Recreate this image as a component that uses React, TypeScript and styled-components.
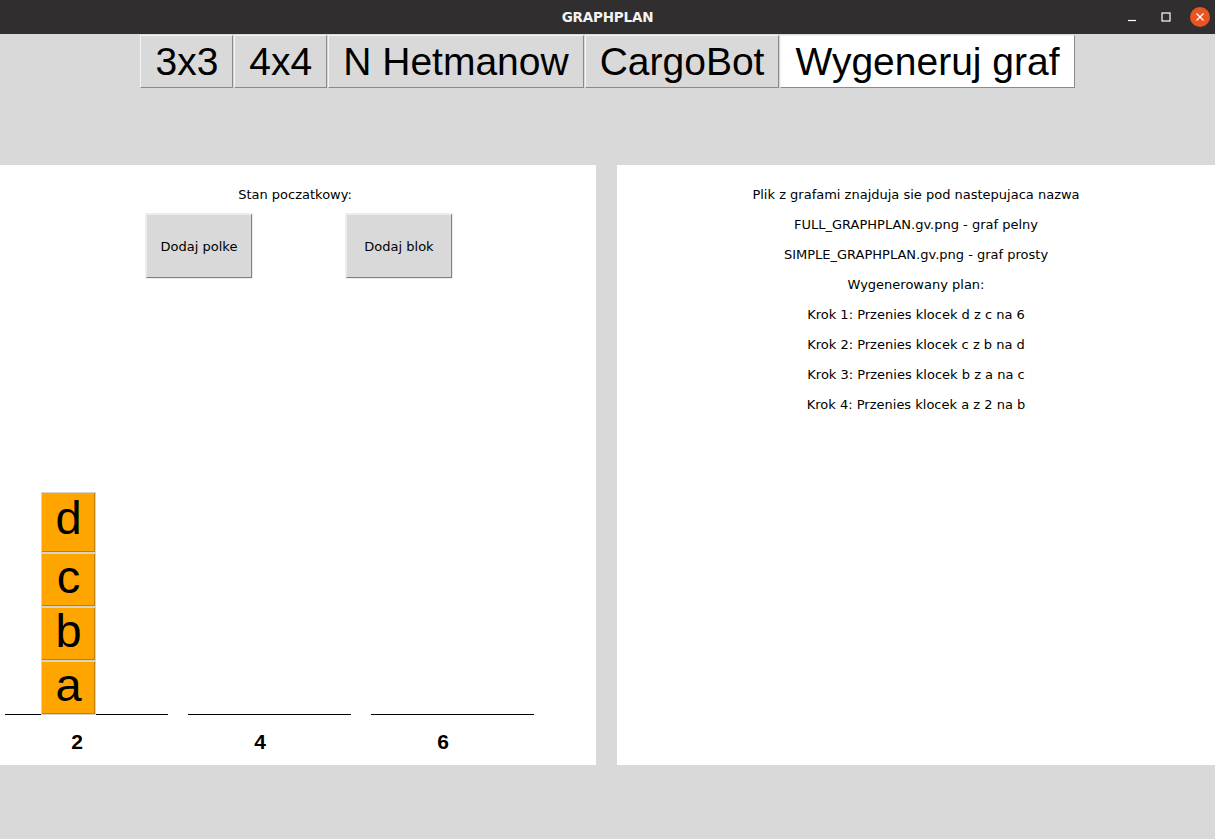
import React from "react";
import styled, { createGlobalStyle } from "styled-components";

const GlobalStyle = createGlobalStyle`
  html, body {
    margin: 0;
    padding: 0;
    background: #d9d9d9;
    font-family: "DejaVu Sans", sans-serif;
  }
`;

const tabs = ["3x3", "4x4", "N Hetmanow", "CargoBot", "Wygeneruj graf"];

const planLines = [
  "Plik z grafami znajduja sie pod nastepujaca nazwa",
  "FULL_GRAPHPLAN.gv.png - graf pelny",
  "SIMPLE_GRAPHPLAN.gv.png - graf prosty",
  "Wygenerowany plan:",
  "Krok 1: Przenies klocek d z c na 6",
  "Krok 2: Przenies klocek c z b na d",
  "Krok 3: Przenies klocek b z a na c",
  "Krok 4: Przenies klocek a z 2 na b",
];

const shelves = [
  { id: 2, blocks: ["d", "c", "b", "a"] },
  { id: 4, blocks: [] as string[] },
  { id: 6, blocks: [] as string[] },
];

const App: React.FC = () => {
  return (
    <>
      <GlobalStyle />
      <Window>
        <TitleBar>
          <span />
          <Title>GRAPHPLAN</Title>
          <Controls>
            <Control>
              <svg width="10" height="10" viewBox="0 0 10 10">
                <line x1="1" y1="8.5" x2="9" y2="8.5" stroke="#fff" strokeWidth="1.2" />
              </svg>
            </Control>
            <Control>
              <svg width="10" height="10" viewBox="0 0 10 10">
                <rect x="1" y="1" width="8" height="8" fill="none" stroke="#fff" strokeWidth="1.2" />
              </svg>
            </Control>
            <CloseButton>
              <svg width="10" height="10" viewBox="0 0 10 10">
                <path d="M1.5 1.5 L8.5 8.5 M8.5 1.5 L1.5 8.5" stroke="#fff" strokeWidth="1.4" />
              </svg>
            </CloseButton>
          </Controls>
        </TitleBar>

        <TabBar>
          {tabs.map((t, i) => (
            <TabButton key={t} $active={i === tabs.length - 1}>{t}</TabButton>
          ))}
        </TabBar>

        <Panels>
          <LeftPanel>
            <Caption $shift={6}>Stan poczatkowy:</Caption>
            <ActionRow>
              <ActionButton>Dodaj polke</ActionButton>
              <ActionButton>Dodaj blok</ActionButton>
            </ActionRow>
            <Scene>
              {shelves.map(s => (
                <Shelf key={s.id}>
                  <Stack>
                    {s.blocks.map((b, i) => (
                      <Block key={b} $tall={i === 0}>{b}</Block>
                    ))}
                  </Stack>
                  <ShelfLine />
                  <ShelfLabel>{s.id}</ShelfLabel>
                </Shelf>
              ))}
            </Scene>
          </LeftPanel>
          <RightPanel>
            {planLines.map(l => (
              <Caption key={l}>{l}</Caption>
            ))}
          </RightPanel>
        </Panels>
      </Window>
    </>
  );
};
export default App;

const Window = styled.div`
  width: 1215px;
  height: 839px;
  background: #d9d9d9;
  display: flex;
  flex-direction: column;
`;

const TitleBar = styled.div`
  height: 34px;
  background: #302e2e;
  display: grid;
  grid-template-columns: 1fr auto 1fr;
  align-items: center;
`;

const Title = styled.div`
  color: #f2f2f2;
  font-family: "DejaVu Sans", sans-serif;
  font-weight: bold;
  font-size: 13.5px;
  letter-spacing: -0.2px;
`;

const Controls = styled.div`
  justify-self: end;
  display: flex;
  align-items: center;
  gap: 14px;
  padding-right: 5px;
`;

const Control = styled.div`
  width: 20px;
  height: 20px;
  display: flex;
  align-items: center;
  justify-content: center;
`;

const CloseButton = styled(Control)`
  border-radius: 50%;
  background: #e95420;
`;

const TabBar = styled.div`
  margin-top: 1px;
  display: flex;
  justify-content: center;
  gap: 1px;
`;

const TabButton = styled.div<{ $active?: boolean }>`
  height: 53px;
  box-sizing: border-box;
  padding: 0 14px;
  display: flex;
  align-items: center;
  font-family: "Liberation Sans", Arial, sans-serif;
  font-size: 39px;
  color: #000;
  background: ${p => (p.$active ? "#ffffff" : "#d9d9d9")};
  border: 1px solid;
  border-color: #f4f4f4 #8a8a8a #8a8a8a #f4f4f4;
`;

const Panels = styled.div`
  margin-top: 77px;
  display: flex;
  gap: 21px;
  height: 600px;
`;

const PanelBase = styled.div`
  background: #ffffff;
  display: flex;
  flex-direction: column;
  padding-top: 15px;
  box-sizing: border-box;
`;

const LeftPanel = styled(PanelBase)`
  width: 596px;
`;

const RightPanel = styled(PanelBase)`
  flex: 1;
`;

const Caption = styled.div<{ $shift?: number }>`
  line-height: 30px;
  font-size: 13px;
  color: #000;
  text-align: center;
  padding-right: ${p => p.$shift ?? 0}px;
`;

const ActionRow = styled.div`
  margin-top: 4px;
  display: flex;
  gap: 94px;
  padding-left: 146px;
`;

const ActionButton = styled.div`
  width: 106px;
  height: 64px;
  box-sizing: border-box;
  display: flex;
  align-items: center;
  justify-content: center;
  background: #d9d9d9;
  font-size: 13px;
  color: #000;
  border: 1px solid;
  border-color: #ececec #7f7f7f #7f7f7f #ececec;
  box-shadow: 0 0 0 1px #ececec;
`;

const Scene = styled.div`
  flex: 1;
  display: flex;
  align-items: flex-end;
  gap: 20px;
  padding: 0 0 11px 5px;
`;

const Shelf = styled.div`
  width: 163px;
  display: flex;
  flex-direction: column;
`;

const Stack = styled.div`
  display: flex;
  flex-direction: column;
  padding-left: 36px;
  margin-bottom: -1px;
  position: relative;
  z-index: 1;
`;

const Block = styled.div<{ $tall?: boolean }>`
  width: 55px;
  height: ${p => (p.$tall ? 61 : 54)}px;
  box-sizing: border-box;
  padding-bottom: ${p => (p.$tall ? 10 : 8)}px;
  background: #ffa500;
  border: 1px solid #d6d2cc;
  box-shadow: inset -1px -1px 0 #c27f00;
  display: flex;
  align-items: center;
  justify-content: center;
  font-family: "Liberation Sans", Arial, sans-serif;
  font-size: 47px;
  line-height: 1;
  color: #000;
`;

const ShelfLine = styled.div`
  height: 1px;
  background: #000;
`;

const ShelfLabel = styled.div`
  margin-top: 15px;
  padding-right: 19px;
  line-height: 24px;
  text-align: center;
  font-family: "Liberation Sans", Arial, sans-serif;
  font-weight: bold;
  font-size: 21px;
  color: #000;
`;
